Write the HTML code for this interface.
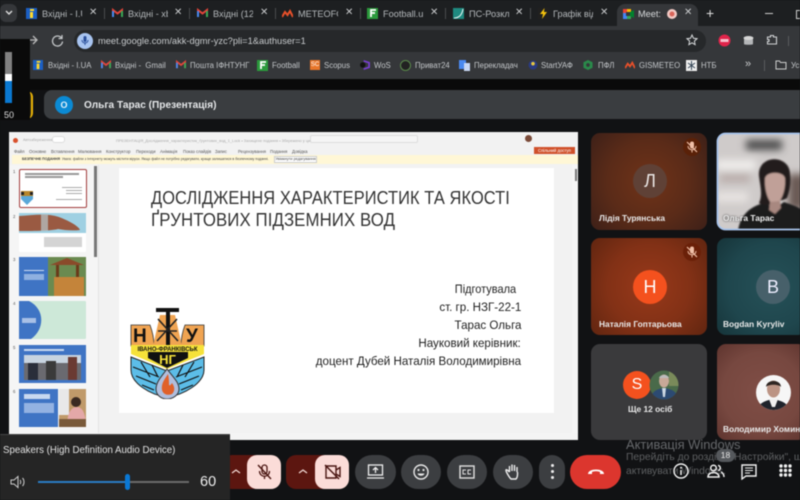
<!DOCTYPE html>
<html><head><meta charset="utf-8"><style>
html,body{margin:0;padding:0;background:#111214}
#r{position:relative;width:800px;height:500px;overflow:hidden;background:#111214;font-family:"Liberation Sans","Noto Sans CJK SC",sans-serif;filter:blur(.4px)}
#r div,#r span,#r svg{position:absolute}
.b{white-space:nowrap}
.tb{font-size:9.2px;color:#b4b8bb;top:8px;white-space:nowrap;overflow:hidden;height:12px;line-height:12px;width:40px}
.x{font-size:10px;color:#c8cacc;top:6px;line-height:14px}
.sep{top:8px;width:1px;height:11px;background:#4a4c4e}
.bk{font-size:7.8px;color:#c3c6c9;top:60px;white-space:nowrap;line-height:11px}
.ic{width:10px;height:10px;top:60px}
.ti{top:8px;width:11px;height:11px}
.nm{font-size:8.4px;font-weight:bold;color:#e8e8e8;white-space:nowrap;line-height:12px}
.cb{top:455px;height:34px;border-radius:17px;background:#3c3e41}
.rb{font-size:4.3px;color:#555;top:147.5px;white-space:nowrap;line-height:7px}
.bd{right:279px;font-size:12.2px;color:#222;white-space:nowrap;line-height:15px;transform:scaleX(.95);transform-origin:right center}
</style></head><body><div id="r">

<!-- tab strip -->
<div style="left:0;top:0;width:800px;height:26px;background:#1d1f21"></div>
<div style="left:0;top:4px;width:17px;height:18px;background:#35373a;border-radius:6px"></div>
<svg style="left:5px;top:10px" width="8" height="6"><path d="M1 1l3 3 3-3" fill="none" stroke="#ddd" stroke-width="1.4"/></svg>

<svg class="ti" style="left:26px" viewBox="0 0 11 11"><rect width="11" height="11" fill="#1b5fc4"/><rect x="4" y="4" width="3" height="6" fill="#ffd92b"/><rect x="4" y="1" width="4" height="2" fill="#ffd92b"/></svg>
<span class="tb" style="left:42px">Вхідні - I.UA</span><span class="x" style="left:89px">✕</span><div class="sep" style="left:104px"></div>
<svg class="ti" style="left:112px" viewBox="0 0 11 11"><path d="M1 9V2l4.5 3.5L10 2v7" fill="none" stroke="#e2453a" stroke-width="2"/><path d="M1 9V3" stroke="#4a8af0" stroke-width="2"/><path d="M10 9V3" stroke="#3aa655" stroke-width="2"/></svg>
<span class="tb" style="left:128px">Вхідні - xbp</span><span class="x" style="left:174px">✕</span><div class="sep" style="left:189px"></div>
<svg class="ti" style="left:197px" viewBox="0 0 11 11"><path d="M1 9V2l4.5 3.5L10 2v7" fill="none" stroke="#e2453a" stroke-width="2"/><path d="M1 9V3" stroke="#4a8af0" stroke-width="2"/><path d="M10 9V3" stroke="#3aa655" stroke-width="2"/></svg>
<span class="tb" style="left:213px">Вхідні (12)</span><span class="x" style="left:260px">✕</span><div class="sep" style="left:275px"></div>
<svg class="ti" style="left:282px" viewBox="0 0 11 11"><path d="M0 9l3-5 2.5 3L8 3l3 6" fill="none" stroke="#e8502a" stroke-width="2"/></svg>
<span class="tb" style="left:298px">METEOFOR</span><span class="x" style="left:345px">✕</span><div class="sep" style="left:360px"></div>
<svg class="ti" style="left:367px" viewBox="0 0 11 11"><rect width="11" height="11" fill="#2b9a3c"/><path d="M4 9V2h5M4 5h4" stroke="#fff" stroke-width="1.8" fill="none"/></svg>
<span class="tb" style="left:383px">Football.ua</span><span class="x" style="left:430px">✕</span><div class="sep" style="left:445px"></div>
<svg class="ti" style="left:453px" viewBox="0 0 11 11"><rect width="11" height="11" fill="#1f8a80"/><path d="M1 10c5 0 8-3 9-9" stroke="#e8f4f2" fill="none"/></svg>
<span class="tb" style="left:469px">ПС-Розкла</span><span class="x" style="left:515px">✕</span><div class="sep" style="left:530px"></div>
<svg class="ti" style="left:538px" viewBox="0 0 11 11"><rect width="11" height="11" fill="#202020"/><path d="M6.5 0L2 6h3L4 11l5-7H6z" fill="#f4c20d"/></svg>
<span class="tb" style="left:553px">Графік відк</span><span class="x" style="left:600px">✕</span>

<div style="left:617px;top:4px;width:81px;height:22px;background:#35373a;border-radius:8px 8px 0 0"></div>
<svg class="ti" style="left:622px;width:12px;height:12px" viewBox="0 0 12 12"><rect x="1" y="1" width="4" height="4" fill="#ea4335"/><rect x="5" y="1" width="4" height="4" fill="#fbbc04"/><rect x="1" y="5" width="4" height="6" fill="#4285f4"/><rect x="5" y="8" width="4" height="3" fill="#34a853"/><path d="M8 4l4-2v8L8 8z" fill="#00832d"/><rect x="4" y="4" width="4" height="4" fill="#35373a"/></svg>
<span class="tb" style="left:638px;color:#d8dadc;width:24px">Meet: </span>
<svg style="left:666px;top:8px" width="12" height="12"><circle cx="6" cy="6" r="5" fill="#f2c9c4"/><circle cx="6" cy="6" r="2.5" fill="#d9655a"/></svg>
<span class="x" style="left:684px">✕</span>
<span class="b" style="left:706px;top:4px;color:#ddd;font-size:14px;line-height:18px">+</span>
<div style="left:765px;top:13px;width:8px;height:1px;background:#ccc"></div>
<div style="left:796px;top:10px;width:8px;height:7px;border:1px solid #ccc"></div>

<!-- toolbar -->
<div style="left:0;top:26px;width:800px;height:26px;background:#35373a"></div>
<div style="left:74px;top:30px;width:632px;height:22px;background:#26282a;border-radius:11px"></div>
<svg style="left:27px;top:34px" width="12" height="12"><path d="M1 6h9M6 2l4 4-4 4" fill="none" stroke="#bbb" stroke-width="1.3"/></svg>
<svg style="left:51px;top:34px" width="13" height="13"><path d="M10.5 4A5 5 0 1 0 11.5 7.5M11 1v3.500H7.500" fill="none" stroke="#c4c7c9" stroke-width="1.3"/></svg>
<div style="left:77px;top:33px;width:16px;height:16px;border-radius:8px;background:#a8c4f0"></div>
<svg style="left:81px;top:35px" width="8" height="12"><rect x="2.5" y="1" width="3" height="6" rx="1.5" fill="#2a4f9a"/><path d="M1 5c0 4 6 4 6 0M4 8v2" stroke="#2a4f9a" fill="none"/></svg>
<span class="b" style="left:98px;top:34px;font-size:9.3px;line-height:14px;color:#c8cbcd">meet.google.com/akk-dgmr-yzc?pli=1&amp;authuser=1</span>
<svg style="left:686px;top:34px" width="12" height="12"><path d="M6 1l1.500 3.300 3.500.4-2.600 2.400.7 3.500L6 8.800 2.900 10.600l.7-3.500L1 4.700l3.500-.4z" fill="none" stroke="#d6d8da"/></svg>
<svg style="left:718px;top:34px" width="13" height="13"><circle cx="6.5" cy="6.5" r="6" fill="#e0244a"/><rect x="2.5" y="5" width="8" height="3" fill="#f5c0cc"/></svg>
<svg style="left:742px;top:35px" width="13" height="11"><path d="M2 3v6c0 1 9 1 9 0V3" fill="#b4b6b8"/><ellipse cx="6.5" cy="3" rx="5" ry="2" fill="#d6d6d6"/></svg>
<svg style="left:766px;top:34px" width="12" height="12"><path d="M1.500 3h3V1.500h3V3h3v7h-9V7.500h1.500V5.500H1.500z" fill="none" stroke="#d0d2d4" stroke-width="1.1"/></svg>
<div style="left:788px;top:36px;width:1px;height:10px;background:#5a5c5e"></div>

<!-- bookmarks -->
<div style="left:0;top:52px;width:800px;height:27px;background:#35373a"></div>
<svg class="ic" style="left:33px" viewBox="0 0 11 11"><rect width="11" height="11" fill="#1b5fc4"/><rect x="4" y="4" width="3" height="6" fill="#ffd92b"/><rect x="4" y="1" width="4" height="2" fill="#ffd92b"/></svg>
<span class="bk" style="left:48px">Вхідні - I.UA</span>
<svg class="ic" style="left:101px" viewBox="0 0 11 11"><path d="M1 9V2l4.5 3.5L10 2v7" fill="none" stroke="#e2453a" stroke-width="2"/><path d="M1 9V3" stroke="#4a8af0" stroke-width="2"/><path d="M10 9V3" stroke="#3aa655" stroke-width="2"/></svg>
<span class="bk" style="left:115px">Вхідні -&nbsp; Gmail</span>
<svg class="ic" style="left:176px" viewBox="0 0 11 11"><path d="M1 9V2l4.5 3.5L10 2v7" fill="none" stroke="#e2453a" stroke-width="2"/><path d="M1 9V3" stroke="#4a8af0" stroke-width="2"/><path d="M10 9V3" stroke="#3aa655" stroke-width="2"/></svg>
<span class="bk" style="left:190px">Пошта ІФНТУНГ</span>
<svg class="ic" style="left:257px;width:11px;height:11px" viewBox="0 0 11 11"><rect width="11" height="11" fill="#2b9a3c"/><path d="M4 9V2h5M4 5h4" stroke="#fff" stroke-width="1.8" fill="none"/></svg>
<span class="bk" style="left:272px">Football</span>
<div style="left:310px;top:60px;width:10px;height:10px;background:#e8762a;color:#fff;font-size:6px;line-height:10px;text-align:center">SC</div>
<span class="bk" style="left:324px">Scopus</span>
<svg class="ic" style="left:360px" viewBox="0 0 11 11"><circle cx="3" cy="5.5" r="3" fill="#111"/><path d="M4 1l6 2v5l-6 2" fill="none" stroke="#7a3fd6" stroke-width="1.8"/></svg>
<span class="bk" style="left:374px">WoS</span>
<svg class="ic" style="left:400px;width:11px;height:11px" viewBox="0 0 11 11"><circle cx="5.5" cy="5.5" r="5" fill="#222" stroke="#5a8a4a"/></svg>
<span class="bk" style="left:415px">Приват24</span>
<svg class="ic" style="left:459px;width:11px;height:11px" viewBox="0 0 11 11"><rect width="7" height="9" fill="#4a8af0"/><rect x="5" y="3" width="6" height="8" fill="#c8d8f4"/></svg>
<span class="bk" style="left:474px">Перекладач</span>
<svg class="ic" style="left:528px" viewBox="0 0 11 11"><circle cx="5.5" cy="5.5" r="5" fill="#2a3a80"/><circle cx="5.5" cy="4" r="2" fill="#e8c840"/></svg>
<span class="bk" style="left:541px">StartУАФ</span>
<svg class="ic" style="left:583px" viewBox="0 0 11 11"><path d="M5.500 0l5 2.500v6L5.500 11l-5-2.500v-6z" fill="#2a8a4a"/><circle cx="5.5" cy="5.5" r="2" fill="#35373a"/></svg>
<span class="bk" style="left:598px">ПФЛ</span>
<svg class="ic" style="left:625px" viewBox="0 0 11 11"><path d="M0 9l3-5 2.500 3L8 3l3 6" fill="none" stroke="#e8502a" stroke-width="2"/></svg>
<span class="bk" style="left:639px">GISMETEO</span>
<svg class="ic" style="left:686px;width:11px;height:11px" viewBox="0 0 11 11"><rect width="11" height="11" fill="#eee"/><path d="M5.500 1v9M2 3l7 5M9 3L2 8" stroke="#345"/></svg>
<span class="bk" style="left:701px">НТБ</span>
<span class="b" style="left:745px;top:58px;font-size:11px;color:#c8cacc;line-height:13px">»</span>
<div style="left:764px;top:60px;width:1px;height:11px;background:#5a5c5e"></div>
<svg style="left:775px;top:60px" width="12" height="10"><path d="M1 1h3.500l1 1.500H11V9H1z" fill="none" stroke="#ccc"/></svg>
<span class="bk" style="left:791px">Усі</span>

<div style="left:0;top:79px;width:800px;height:11px;background:#0a0a0a"></div>

<!-- meet header -->
<div style="left:16px;top:91px;width:17px;height:28px;background:#3a3414;border-radius:0 6px 6px 0;border-right:2px solid #eab308;box-sizing:border-box"></div>
<div style="left:44px;top:90px;width:770px;height:29px;background:#3a3d40;border-radius:8px"></div>
<div style="left:55px;top:96px;width:18px;height:18px;border-radius:9px;background:#0b8ad4;color:#e4f2fb;font-size:9px;font-weight:bold;line-height:18px;text-align:center">О</div>
<span class="b" style="left:84px;top:98px;font-size:10.1px;font-weight:bold;line-height:15px;color:#e6e8ea">Ольга Тарас (Презентація)</span>

<!-- presentation -->
<div style="left:9px;top:132px;width:569px;height:308px;background:#f2f2f2"></div>
<div style="left:13px;top:138px;width:5px;height:5px;border-radius:3px;background:#d8502c"></div>
<span class="rb" style="left:23px;top:136.5px;color:#aaa;font-size:3.8px">Автозбереження</span>
<div style="left:52px;top:136px;width:11px;height:5px;border-radius:3px;background:#fff;border:1px solid #ddd"></div>
<span class="rb" style="left:116px;top:136.5px;color:#aaa;font-size:3.9px">ПРЕЗЕНТАЦІЯ_Дослідження_характеристик_ґрунтових_вод_1_Lock  •  Захищене подання  •  Збережено у ци ПК</span>
<div style="left:310px;top:135px;width:108px;height:8px;background:#f5f5f5;border:1px solid #ddd;border-radius:2px;box-sizing:border-box"></div>
<div style="left:525px;top:135px;width:7px;height:7px;border-radius:4px;background:#7a4a38"></div>
<span class="rb" style="left:14px">Файл</span><span class="rb" style="left:29px">Основне</span><span class="rb" style="left:51px">Вставлення</span><span class="rb" style="left:78px">Малювання</span><span class="rb" style="left:106px">Конструктор</span><span class="rb" style="left:136px">Переходи</span><span class="rb" style="left:160px">Анімація</span><span class="rb" style="left:183px">Показ слайдів</span><span class="rb" style="left:215px">Запис</span><span class="rb" style="left:238px">Рецензування</span><span class="rb" style="left:270px">Подання</span><span class="rb" style="left:292px">Довідка</span>
<div style="left:534px;top:147px;width:41px;height:7px;background:#d0502a;color:#fff;font-size:4.3px;line-height:7px;text-align:center;white-space:nowrap">Спільний доступ</div>
<div style="left:12px;top:155px;width:566px;height:9px;background:#fff7d6"></div>
<span class="rb" style="left:22px;top:155.5px;font-size:3.5px;color:#444"><b>БЕЗПЕЧНЕ ПОДАННЯ</b>&nbsp; Увага: файли з Інтернету можуть містити віруси. Якщо файл не потрібно редагувати, краще залишатися в безпечному поданні.</span>
<div style="left:274px;top:156px;width:43px;height:7px;background:#fff;border:1px solid #ccc;box-sizing:border-box;color:#444;font-size:3.8px;line-height:5px;text-align:center;white-space:nowrap;overflow:hidden">Увімкнути редагування</div>

<div style="left:9px;top:165px;width:89px;height:268px;background:#f5f5f5"></div>
<div style="left:94px;top:166px;width:3px;height:91px;background:#777"></div>
<div style="left:98px;top:165px;width:1px;height:268px;background:#e2e2e2"></div>
<div style="left:572px;top:165px;width:6px;height:268px;background:#f5f5f5"></div>
<div style="left:575px;top:169px;width:2px;height:12px;background:#777"></div>
<div style="left:119px;top:168px;width:435px;height:245px;background:#fff"></div>
<div style="left:9px;top:433px;width:569px;height:7px;background:#f4f4f4"></div>

<!-- thumbs -->
<span class="rb" style="left:13px;top:168px">1</span><span class="rb" style="left:13px;top:213px">2</span><span class="rb" style="left:13px;top:256px">3</span><span class="rb" style="left:13px;top:300px">4</span><span class="rb" style="left:13px;top:344px">5</span><span class="rb" style="left:13px;top:388px">6</span>
<div style="left:19px;top:169px;width:68px;height:39px;background:#fff;border:1px solid #a23c3c;box-sizing:border-box;border-radius:2px"></div>
<div style="left:25px;top:173px;width:54px;height:1.5px;background:#999"></div>
<div style="left:25px;top:176px;width:38px;height:1.5px;background:#999"></div>
<div style="left:62px;top:187px;width:20px;height:1px;background:#aaa"></div>
<div style="left:66px;top:190px;width:16px;height:1px;background:#aaa"></div>
<div style="left:66px;top:193px;width:16px;height:1px;background:#aaa"></div>
<div style="left:56px;top:199px;width:26px;height:1px;background:#aaa"></div>
<svg style="left:21px;top:190px" width="12" height="15"><path d="M0 2h12v7L6 15 0 9z" fill="#5aa8d8"/><path d="M0 1h12v5H0z" fill="#b8862a"/><rect x="0" y="2" width="3" height="3" fill="#222"/><rect x="9" y="2" width="3" height="3" fill="#222"/></svg>

<div style="left:19px;top:213px;width:67px;height:39px;background:#fff;border-radius:1px"></div>
<svg style="left:19px;top:213px" width="67" height="20"><rect width="67" height="20" fill="#9fd0e2"/><path d="M0 3c15-1 28-3 40 1 8 3 20 9 21 13-8 1-16 0-22-1-6 2-28 2-39 2z" fill="#9a5a42"/><rect x="22" y="1" width="7" height="17" fill="#b8c8cc" opacity=".7"/></svg>
<div style="left:44px;top:237px;width:38px;height:10px;background:#d4d4d4"></div>

<div style="left:19px;top:257px;width:29px;height:39px;background:#3f74c4"></div>
<svg style="left:48px;top:257px" width="38" height="39"><rect width="38" height="39" fill="#6a8a50"/><path d="M2 8L19 1l17 7z" fill="#8a4a2a"/><rect x="8" y="8" width="3" height="20" fill="#6a3a1a"/><rect x="28" y="8" width="3" height="20" fill="#6a3a1a"/><rect x="6" y="20" width="30" height="19" fill="#c4843a"/></svg>
<div style="left:24px;top:270px;width:20px;height:1px;background:#cfdcf2"></div><div style="left:24px;top:274px;width:20px;height:6px;background:#8fb0e0"></div>

<div style="left:19px;top:301px;width:67px;height:38px;background:#cde8d8;border-radius:1px;overflow:hidden"></div>
<svg style="left:19px;top:301px" width="24" height="38"><path d="M0 0h10c16 8 16 28 2 38H0z" fill="#3f74c4"/></svg>
<div style="left:22px;top:318px;width:14px;height:5px;background:#a8c0e6"></div>

<div style="left:19px;top:345px;width:67px;height:38px;background:#3f74c4"></div>
<div style="left:24px;top:349px;width:40px;height:2px;background:#c8d8f0"></div>
<svg style="left:24px;top:355px" width="57" height="25"><rect width="57" height="25" fill="#6a6a70"/><rect x="0" y="0" width="57" height="8" fill="#c8d4e0"/><rect x="4" y="8" width="10" height="17" fill="#2a2e3a"/><rect x="22" y="6" width="10" height="19" fill="#3a3a3a"/><rect x="44" y="2" width="9" height="23" fill="#6a3a32"/></svg>

<div style="left:19px;top:389px;width:39px;height:38px;background:#3f74c4"></div>
<div style="left:24px;top:394px;width:26px;height:5px;background:#c8d8f0"></div><div style="left:24px;top:403px;width:30px;height:10px;background:#93b2e2"></div>
<svg style="left:59px;top:389px" width="27" height="38"><rect width="27" height="38" fill="#c09a6a"/><rect x="0" y="0" width="10" height="26" fill="#e8e8e8"/><circle cx="17" cy="13" r="5" fill="#3a2a22"/><path d="M8 38c0-14 4-20 10-20s9 8 9 20z" fill="#e4a8a8"/><rect x="0" y="30" width="27" height="8" fill="#7a5a3a"/></svg>

<!-- slide text -->
<div class="b" style="left:151px;top:187px;font-size:18.2px;line-height:22px;color:#333;letter-spacing:.1px;transform:scaleX(.902);transform-origin:left center">ДОСЛІДЖЕННЯ ХАРАКТЕРИСТИК ТА ЯКОСТІ</div>
<div class="b" style="left:151px;top:209px;font-size:18.2px;line-height:22px;color:#333;letter-spacing:.1px;transform:scaleX(.924);transform-origin:left center">ҐРУНТОВИХ ПІДЗЕМНИХ ВОД</div>
<div class="bd" style="top:282px;right:284px;transform:scaleX(.9)">Підготувала</div>
<div class="bd" style="top:300px">ст. гр. НЗГ-22-1</div>
<div class="bd" style="top:318px">Тарас Ольга</div>
<div class="bd" style="top:336px">Науковий керівник:</div>
<div class="bd" style="top:354px">доцент Дубей Наталія Володимирівна</div>

<!-- logo -->
<svg style="left:130px;top:307px" width="75" height="92" viewBox="0 0 75 92">
<path d="M1 18h19c3 8 4 14 4 21H1z" fill="#f0a452" stroke="#333" stroke-width=".8"/>
<path d="M74 18H55c-3 8-4 14-4 21h23z" fill="#f0a452" stroke="#333" stroke-width=".8"/>
<path d="M30 8h15l7 31H23z" fill="#f0a452"/>
<path d="M26 1h23v4H40v33h-4V5H26z" fill="#111"/>
<path d="M28 12l20 22M47 12L27 34M28 24h19" stroke="#222" stroke-width="1.6" fill="none"/>
<text x="3" y="35" font-family="Liberation Sans" font-size="19" font-weight="bold" fill="#111">Н</text>
<text x="56" y="35" font-family="Liberation Sans" font-size="19" font-weight="bold" fill="#111">У</text>
<rect x="1" y="38" width="73" height="7" fill="#f6e23a"/>
<text x="37.5" y="44" font-family="Liberation Sans" font-size="6" font-weight="bold" text-anchor="middle" fill="#111">ІВАНО-ФРАНКІВСЬК</text>
<path d="M1 45h73v2L37 62 1 47z" fill="#f6e23a"/>
<path d="M18 45h40v6L37 61 18 51z" fill="#111"/>
<text x="37.5" y="57" font-family="Liberation Sans" font-size="13" font-weight="bold" text-anchor="middle" fill="#f6e23a">НГ</text>
<path d="M1 50l36 14 37-14v13C74 76 54 88 37 90 20 88 1 76 1 63z" fill="#5cbde8" stroke="#222"/>
<path d="M3 60l26 10M6 69l20 8M12 78l12 5M72 60l-26 10M69 69l-20 8M63 78l-12 5M11 55l9 15M22 58l6 12M64 55l-9 15M53 58l-6 12" stroke="#111" stroke-width="1.2" fill="none"/>
<path d="M37 62c-6 8-11 13-11 20 0 6 5 10 11 10s12-4 12-10c0-7-6-12-12-20z" fill="#b0bedd" stroke="#333"/>
<path d="M38 67c-4 6-7 10-6 16 1 4 5 6 10 4 3-3 3-7 0-11-2 3-3 3-3 1 0-3 0-6-1-10z" fill="#e0612a"/>
</svg>

<!-- tiles -->
<div style="left:591px;top:133px;width:116px;height:97px;border-radius:9px;background:radial-gradient(circle at 50% 50%,#703319 0%,#5a2b18 55%,#3d2018 100%)"></div>
<div style="left:633px;top:164px;width:34px;height:34px;border-radius:17px;background:#5f4136;color:#e8e4e2;font-size:18px;line-height:34px;text-align:center">Л</div>
<span class="nm" style="left:599px;top:212px">Лідія Турянська</span>

<svg style="left:716px;top:132px" width="90" height="99">
<defs><filter id="f" x="-30%" y="-30%" width="160%" height="160%"><feGaussianBlur stdDeviation="4"/></filter><filter id="g" x="-30%" y="-30%" width="160%" height="160%"><feGaussianBlur stdDeviation=".8"/></filter><clipPath id="c"><rect x="1.5" y="1.5" width="90" height="96" rx="8"/></clipPath></defs>
<g clip-path="url(#c)">
<rect width="90" height="99" fill="#cfcbca"/>
<g filter="url(#f)"><rect x="30" y="8" width="36" height="10" fill="#4a4a4a"/><rect x="0" y="28" width="40" height="10" fill="#f0eeec"/><rect x="4" y="42" width="30" height="8" fill="#b8aba8"/><rect x="0" y="60" width="32" height="10" fill="#e8e4e2"/><rect x="72" y="42" width="18" height="36" fill="#6a5a54"/></g>
<g filter="url(#g)">
<path d="M22 99c2-14 10-24 26-28 6 4 14 4 20-1 8 3 16 5 24 12v17z" fill="#1c1b1e"/>
<path d="M43 44c-2-22 31-22 31-2 1 8 0 16-3 24-3 2-5 2-8 3-2 4-15 6-20 2 4-8 1-18 0-27z" fill="#241a1a"/>
<path d="M49 46c2-7 18-7 20 0 1 11-3 24-10 27-6 0-11-14-10-27z" fill="#c0a098"/>
<path d="M54 70l-1 8 6 4 6-6-1-7z" fill="#a88880"/>
</g></g>
<rect x="1.5" y="1.5" width="90" height="96" rx="8" fill="none" stroke="#a8c4ec" stroke-width="1.8"/>
</svg>
<span class="nm" style="left:723px;top:212px;text-shadow:0 0 2px #333">Ольга Тарас</span>

<div style="left:591px;top:238px;width:116px;height:97px;border-radius:9px;background:radial-gradient(circle at 50% 50%,#98391a 0%,#823116 55%,#602510 100%)"></div>
<div style="left:633px;top:270px;width:34px;height:34px;border-radius:17px;background:#f4511e;color:#fff;font-size:18px;line-height:34px;text-align:center">Н</div>
<span class="nm" style="left:599px;top:318px">Наталія Гоптарьова</span>

<div style="left:717px;top:238px;width:90px;height:97px;border-radius:9px;background:radial-gradient(circle at 60% 50%,#265158 0%,#1f464d 60%,#163439 100%)"></div>
<div style="left:756px;top:270px;width:34px;height:34px;border-radius:17px;background:#47606a;color:#eef;font-size:18px;line-height:34px;text-align:center">B</div>
<span class="nm" style="left:723px;top:318px">Bogdan Kyryliv</span>

<div style="left:591px;top:344px;width:116px;height:96px;border-radius:9px;background:#3a3a3c"></div>
<div style="left:623px;top:371px;width:28px;height:28px;border-radius:14px;background:#f4511e;color:#fff;font-size:16px;line-height:28px;text-align:center">S</div>
<svg style="left:649px;top:370px" width="30" height="30"><defs><clipPath id="d"><circle cx="15" cy="15" r="14.5"/></clipPath></defs><g clip-path="url(#d)"><rect width="30" height="30" fill="#4a6a4a"/><rect x="20" width="10" height="16" fill="#7a8a5a"/><path d="M2 30c0-8 5-11 13-12 8 1 14 4 14 12z" fill="#2c4a72"/><ellipse cx="15" cy="11" rx="5" ry="6.5" fill="#c8a898"/><path d="M10 8c1-4 9-4 10 0z" fill="#bbb"/><path d="M13 18h4l-1 9h-2z" fill="#cdd8e4"/></g></svg>
<span class="nm" style="left:628px;top:403px">Ще 12 осіб</span>

<div style="left:717px;top:344px;width:90px;height:96px;border-radius:9px;background:radial-gradient(circle at 50% 50%,#804e46 0%,#774840 60%,#5e342e 100%)"></div>
<svg style="left:756px;top:375px" width="35" height="35"><defs><clipPath id="e"><circle cx="17.5" cy="17.5" r="17.5"/></clipPath></defs><g clip-path="url(#e)"><rect width="35" height="35" fill="#f6f6f6"/><path d="M2 35c1-7 6-9 15-11 9 2 15 4 16 11z" fill="#20242c"/><path d="M13 24h9l-3 8h-3z" fill="#f0f0f0"/><ellipse cx="17.5" cy="14" rx="6.5" ry="8.5" fill="#bc9484"/><path d="M10 12c0-8 15-8 15 0-2-3-13-3-15 0z" fill="#2e2622"/></g></svg>
<span class="nm" style="left:723px;top:423px">Володимир Хоминець</span>

<svg style="left:683px;top:138px" width="18" height="18"><circle cx="9" cy="9" r="9" fill="#5a2108"/><rect x="7" y="3.5" width="4" height="7" rx="2" fill="#f0c0a8"/><path d="M5 8c0 5 8 5 8 0M9 12v2.5" stroke="#f0c0a8" fill="none"/><path d="M4 4l10 10" stroke="#f0c0a8" stroke-width="1.2"/></svg>
<svg style="left:683px;top:243px" width="18" height="18"><circle cx="9" cy="9" r="9" fill="#6a2008"/><rect x="7" y="3.5" width="4" height="7" rx="2" fill="#f0c0a8"/><path d="M5 8c0 5 8 5 8 0M9 12v2.5" stroke="#f0c0a8" fill="none"/><path d="M4 4l10 10" stroke="#f0c0a8" stroke-width="1.2"/></svg>

<!-- activation -->
<span class="b" style="left:626px;top:437px;font-size:12.9px;line-height:15px;color:#66686b">Активація Windows</span>
<span class="b" style="left:626px;top:451px;font-size:10.3px;line-height:14px;color:#5e6062">Перейдіть до розділу "Настройки", щоб</span>
<span class="b" style="left:626px;top:465px;font-size:10.3px;line-height:14px;color:#5e6062">активувати Windows.</span>

<!-- controls -->
<div style="left:222px;top:455px;width:50px;height:34px;border-radius:10px;background:#5c1610"></div>
<div style="left:247px;top:455px;width:34px;height:34px;border-radius:10px;background:#fbdcd8"></div>
<svg style="left:231px;top:468px" width="10" height="7"><path d="M1 5l4-3 4 3" fill="none" stroke="#f0d8d4" stroke-width="1.3"/></svg>
<svg style="left:257px;top:463px" width="15" height="18"><rect x="5" y="2" width="5" height="9" rx="2.5" fill="none" stroke="#4a1612" stroke-width="1.3"/><path d="M2.500 8c0 7 10 7 10 0M7.500 13v3" stroke="#4a1612" fill="none" stroke-width="1.3"/><path d="M1 2l13 14" stroke="#4a1612" stroke-width="1.4"/></svg>
<div style="left:286px;top:455px;width:50px;height:34px;border-radius:10px;background:#5c1610"></div>
<div style="left:315px;top:455px;width:34px;height:34px;border-radius:10px;background:#fbdcd8"></div>
<svg style="left:298px;top:468px" width="10" height="7"><path d="M1 5l4-3 4 3" fill="none" stroke="#f0d8d4" stroke-width="1.3"/></svg>
<svg style="left:324px;top:464px" width="17" height="16"><path d="M2 2h10v12H2zM12 6l4-2.500v9L12 10" fill="none" stroke="#4a1612" stroke-width="1.4"/><path d="M1 1l14 14" stroke="#4a1612" stroke-width="1.5"/></svg>

<div class="cb" style="left:355px;width:41px"></div>
<svg style="left:367px;top:464px" width="17" height="16"><rect x="1.5" y="1" width="14" height="10" fill="none" stroke="#eee" stroke-width="1.3"/><path d="M8.500 9V4M6 6l2.500-2.500L11 6" fill="none" stroke="#eee" stroke-width="1.3"/><path d="M0 14h17" stroke="#eee" stroke-width="1.3"/></svg>
<div class="cb" style="left:401px;width:40px"></div>
<svg style="left:413px;top:464px" width="16" height="16"><circle cx="8" cy="8" r="7" fill="none" stroke="#e8e8e8" stroke-width="1.4"/><circle cx="5.5" cy="6" r="1.1" fill="#e8e8e8"/><circle cx="10.5" cy="6" r="1.1" fill="#e8e8e8"/><path d="M4.500 9.500h7c-.8 3-6.200 3-7 0z" fill="#e8e8e8"/></svg>
<div class="cb" style="left:447px;width:40px"></div>
<svg style="left:459px;top:465px" width="16" height="14"><rect x="1" y="1" width="14" height="12" fill="none" stroke="#e0e0e0" stroke-width="1.4"/><path d="M7 5H4v4h3M12 5H9v4h3" fill="none" stroke="#e0e0e0"/></svg>
<div class="cb" style="left:493px;width:40px"></div>
<svg style="left:505px;top:462px" width="16" height="19"><path d="M4.500 10V4M7 9V2.500M9.500 9V3M12 10V5M4.500 10c-1-1-3-3-3.500-2-.5 1 3 7 5 9h5c2-2 1.500-5 1.500-7" fill="none" stroke="#eee" stroke-width="1.4"/></svg>
<div class="cb" style="left:539px;width:26px"></div>
<div style="left:550.5px;top:464px;width:3px;height:3px;border-radius:2px;background:#eee"></div>
<div style="left:550.5px;top:470px;width:3px;height:3px;border-radius:2px;background:#eee"></div>
<div style="left:550.5px;top:476px;width:3px;height:3px;border-radius:2px;background:#eee"></div>
<div class="cb" style="left:570px;width:51px;background:#dc362e"></div>
<svg style="left:587px;top:466px" width="18" height="11"><path d="M1 8c0-6 16-6 16 0l-4 0V6c-2-1-6-1-8 0v2z" fill="#fff"/></svg>

<svg style="left:673px;top:463px" width="16" height="16"><circle cx="8" cy="8" r="7" fill="none" stroke="#f2f2f2" stroke-width="1.4"/><path d="M8 7v5" stroke="#f2f2f2" stroke-width="1.5"/><circle cx="8" cy="4.7" r="1" fill="#f2f2f2"/></svg>
<svg style="left:707px;top:464px" width="18" height="14"><circle cx="6.5" cy="4" r="2.8" fill="none" stroke="#f2f2f2" stroke-width="1.5"/><path d="M1 13c0-6 11-6 11 0z" fill="none" stroke="#f2f2f2" stroke-width="1.5"/><path d="M11 1.500c3 0 3 5 0 5M14 8c2 1 3 3 3 5" fill="none" stroke="#f2f2f2" stroke-width="1.5"/></svg>
<div style="left:716px;top:449px;width:19px;height:13px;border-radius:7px;background:#55585c;color:#e8e8e8;font-size:8.5px;line-height:13px;text-align:center">18</div>
<svg style="left:741px;top:464px" width="16" height="16"><path d="M1 1h14v11H5l-4 3z" fill="none" stroke="#f2f2f2" stroke-width="1.4"/><path d="M4 4h8M4 6.500h8M4 9h5" stroke="#f2f2f2"/></svg>
<svg style="left:779px;top:464px" width="13" height="13"><g fill="#f2f2f2"><circle cx="2" cy="2" r="1.7"/><circle cx="6.5" cy="2" r="1.7"/><circle cx="11" cy="2" r="1.7"/><circle cx="2" cy="6.5" r="1.7"/><circle cx="6.5" cy="6.5" r="1.7"/><circle cx="11" cy="6.5" r="1.7"/><circle cx="2" cy="11" r="1.7"/><circle cx="6.5" cy="11" r="1.7"/><circle cx="11" cy="11" r="1.7"/></g></svg>

<!-- system volume overlays -->
<div style="left:0;top:39px;width:30px;height:81px;background:#0a0a0a"></div>
<div style="left:5px;top:52px;width:7px;height:22px;background:#808080"></div>
<div style="left:5px;top:74px;width:7px;height:7px;background:#fff"></div>
<div style="left:5px;top:81px;width:7px;height:22px;background:#0a78d0"></div>
<span class="b" style="left:4px;top:109px;font-size:9px;line-height:12px;color:#ddd">50</span>

<div style="left:0;top:435px;width:230px;height:65px;background:#252525;box-shadow:0 -1px 0 #444"></div>
<span class="b" style="left:3px;top:444px;font-size:9.7px;line-height:13px;color:#e2e2e2">Speakers (High Definition Audio Device)</span>
<svg style="left:9px;top:475px" width="18" height="14"><path d="M2 5h3l4-3.500v11L5 9H2z" fill="none" stroke="#ccc"/><path d="M11 5c1 1 1 3 0 4M13.500 3c2 2 2 6 0 8" fill="none" stroke="#ccc"/></svg>
<div style="left:38px;top:481px;width:89px;height:2px;background:#2a7cc4"></div>
<div style="left:127px;top:481px;width:62px;height:2px;background:#6a6a6a"></div>
<div style="left:125px;top:474px;width:5px;height:16px;border-radius:3px;background:#0a78d4"></div>
<span class="b" style="left:200px;top:473px;font-size:14.5px;line-height:18px;color:#f0f0f0">60</span>

</div></body></html>
